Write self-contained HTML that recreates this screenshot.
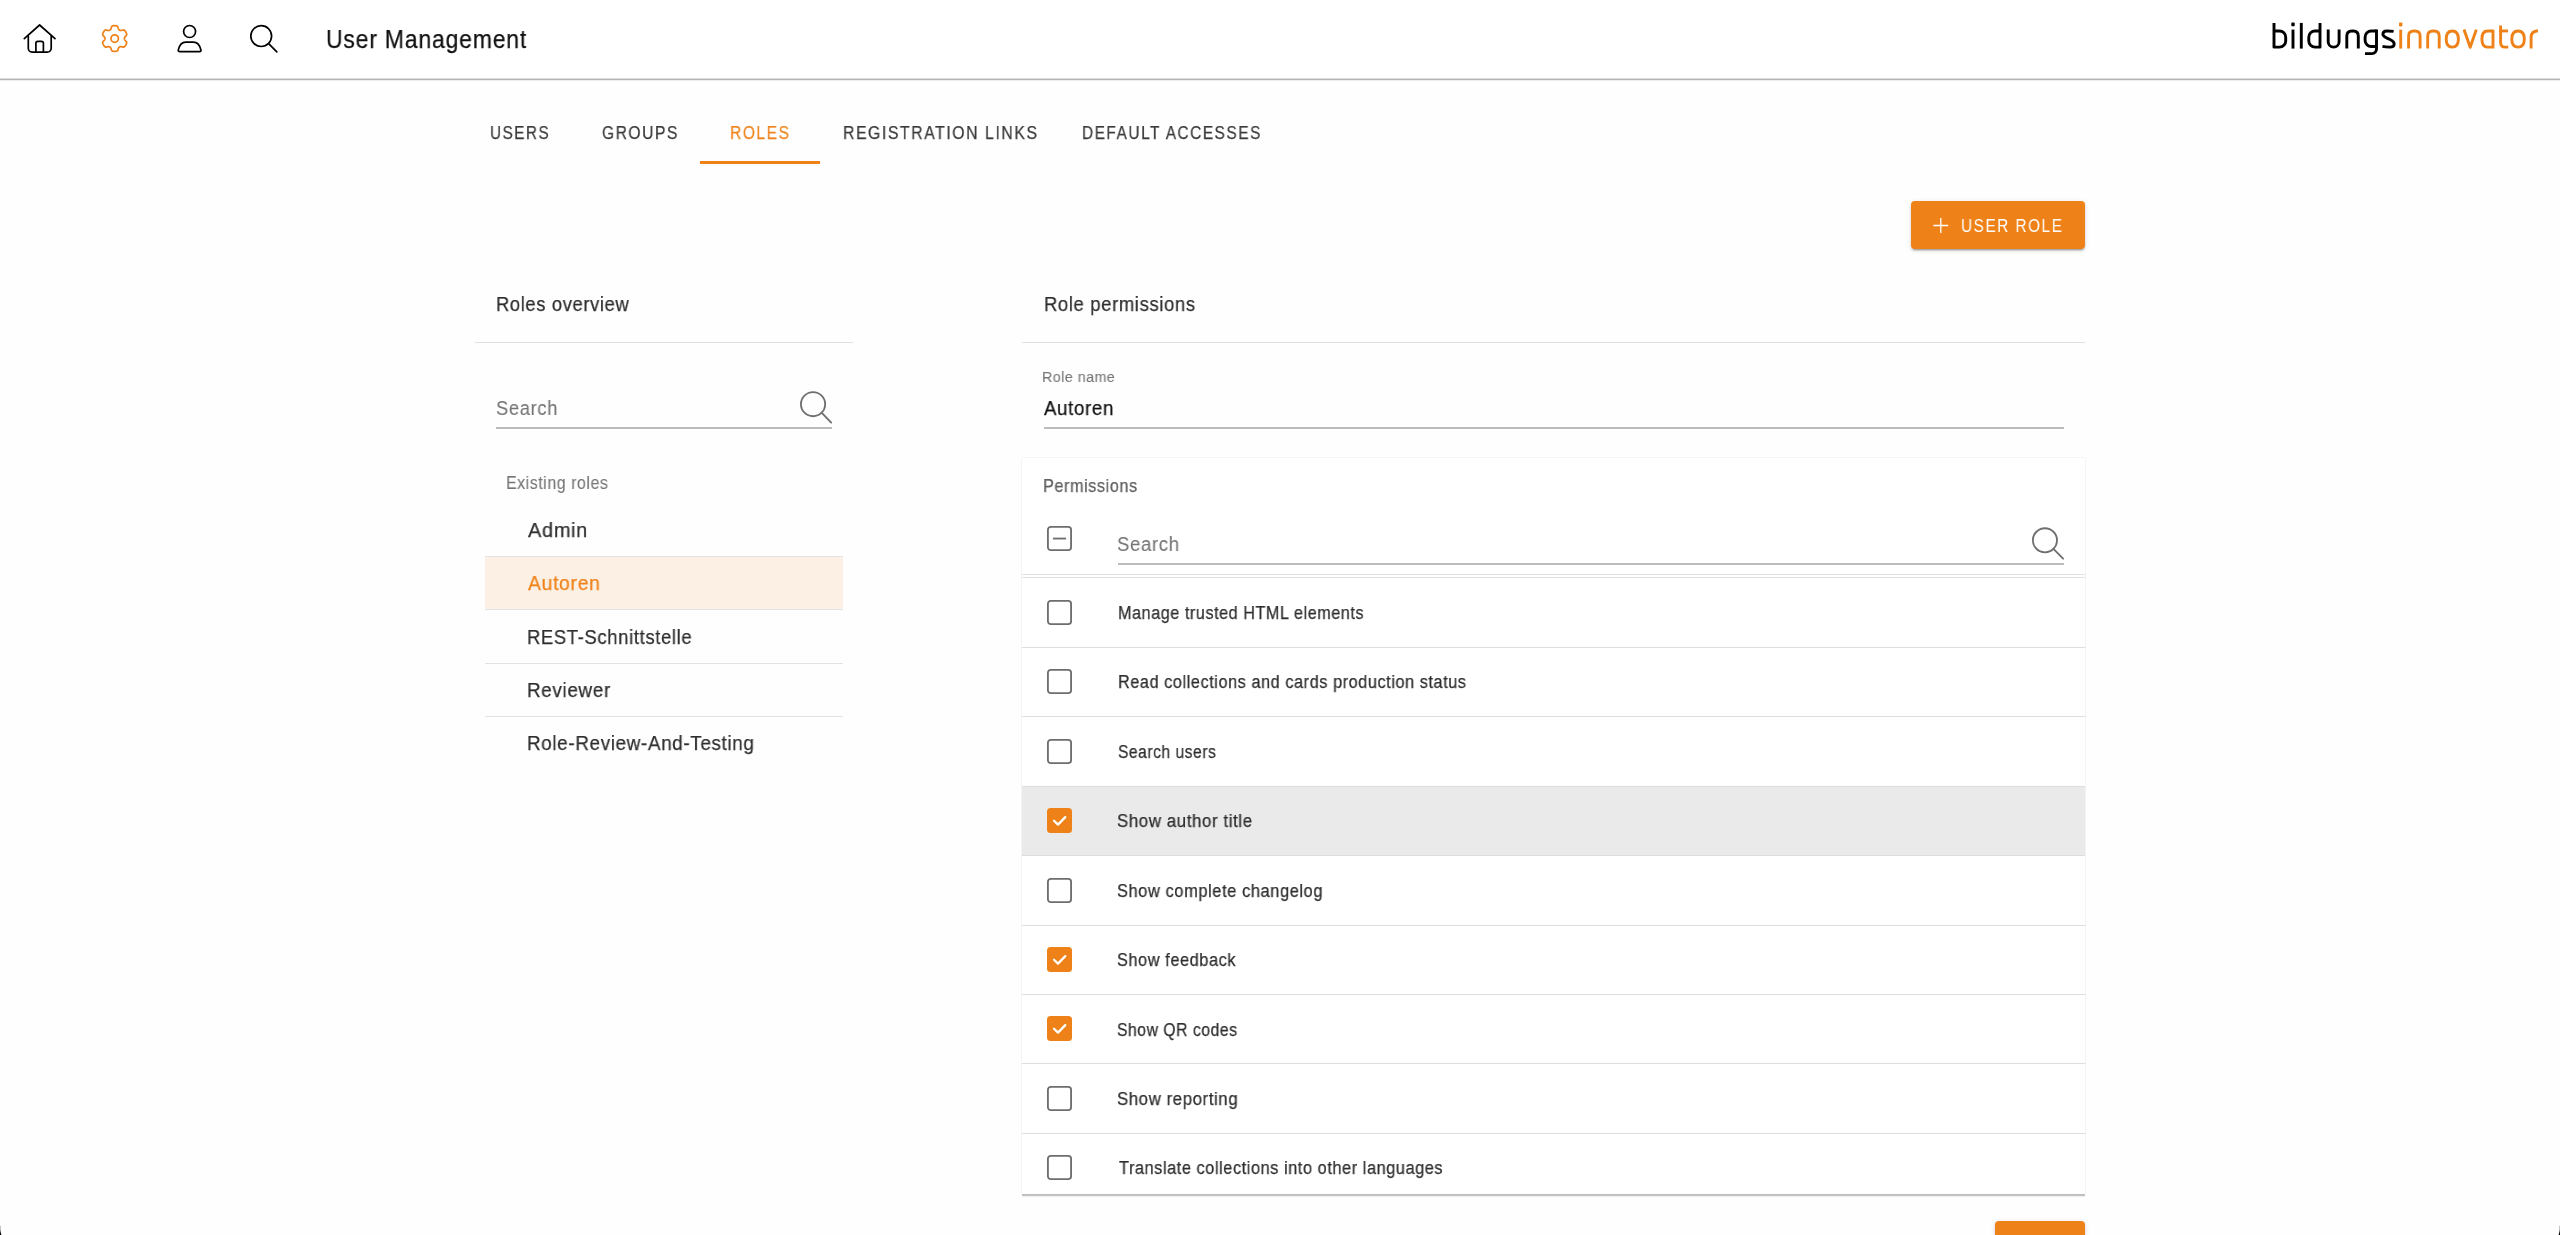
<!DOCTYPE html>
<html><head><meta charset="utf-8"><title>User Management</title>
<style>
html,body{margin:0;padding:0;}
body{width:2560px;height:1235px;overflow:hidden;position:relative;background:#fefefe;font-family:"Liberation Sans",sans-serif;}
.t{position:absolute;white-space:nowrap;transform-origin:0 0;will-change:transform;-webkit-text-stroke:0.25px currentColor;}
</style></head><body>
<div style="position:absolute;left:0px;top:0px;width:2560px;height:79px;background:#fff"></div>
<div style="position:absolute;left:0px;top:78px;width:2560px;height:1px;background:#dcdcdc"></div>
<div style="position:absolute;left:0px;top:79px;width:2560px;height:1px;background:#b4b4b4"></div>
<div style="position:absolute;left:0px;top:80px;width:2560px;height:1px;background:#ededed"></div>
<svg style="position:absolute;left:0;top:0" width="300" height="79" viewBox="0 0 300 79" fill="none" stroke-linecap="round" stroke-linejoin="round">
<g stroke="#000" stroke-width="1.7">
<path d="M24.3 38.7 L39.6 25 L55 38.7"/>
<path d="M28.3 36 V48.3 a3.8 3.8 0 0 0 3.8 3.8 H47.4 a3.8 3.8 0 0 0 3.8 -3.8 V36"/>
<path d="M35.9 52 V43.3 a2 2 0 0 1 2 -2 H41.4 a2 2 0 0 1 2 2 V52"/>
<circle cx="189.6" cy="31.5" r="6"/>
<path d="M180 51.6 H199.4 Q201.3 51.6 200.9 49.9 C199.8 45.5 197 42.2 193.5 42.2 H185.7 C182.2 42.2 179.4 45.5 178.3 49.9 Q177.9 51.6 180 51.6 Z"/>
<circle cx="261.2" cy="36.1" r="10.4"/>
<path d="M268.9 43.8 L276.8 51.8"/>
</g>
<path d="M110.30 29.78 L110.59 29.48 L110.84 29.04 L111.07 28.47 L111.27 27.76 L111.44 26.91 L111.94 26.27 L112.76 25.85 L113.92 25.64 L115.42 25.64 L116.58 25.85 L117.40 26.27 L117.90 26.91 L118.07 27.76 L118.27 28.47 L118.50 29.04 L118.75 29.48 L119.04 29.78 L119.36 30.03 L119.70 30.23 L120.08 30.38 L120.48 30.48 L120.99 30.48 L121.60 30.39 L122.32 30.21 L123.13 29.93 L123.93 30.04 L124.71 30.55 L125.48 31.45 L126.22 32.74 L126.62 33.85 L126.67 34.78 L126.37 35.53 L125.72 36.10 L125.20 36.63 L124.82 37.11 L124.57 37.55 L124.45 37.95 L124.39 38.35 L124.39 38.75 L124.45 39.15 L124.57 39.55 L124.82 39.99 L125.20 40.47 L125.72 41.00 L126.37 41.57 L126.67 42.32 L126.62 43.25 L126.22 44.36 L125.48 45.65 L124.71 46.55 L123.93 47.06 L123.13 47.17 L122.32 46.89 L121.60 46.71 L120.99 46.62 L120.48 46.62 L120.08 46.72 L119.70 46.87 L119.36 47.07 L119.04 47.32 L118.75 47.62 L118.50 48.06 L118.27 48.63 L118.07 49.34 L117.90 50.19 L117.40 50.83 L116.58 51.25 L115.42 51.46 L113.92 51.46 L112.76 51.25 L111.94 50.83 L111.44 50.19 L111.27 49.34 L111.07 48.63 L110.84 48.06 L110.59 47.62 L110.30 47.32 L109.98 47.07 L109.64 46.87 L109.26 46.72 L108.86 46.62 L108.35 46.62 L107.74 46.71 L107.02 46.89 L106.21 47.17 L105.41 47.06 L104.63 46.55 L103.86 45.65 L103.12 44.36 L102.72 43.25 L102.67 42.32 L102.97 41.57 L103.62 41.00 L104.14 40.47 L104.52 39.99 L104.77 39.55 L104.89 39.15 L104.95 38.75 L104.95 38.35 L104.89 37.95 L104.77 37.55 L104.52 37.11 L104.14 36.63 L103.62 36.10 L102.97 35.53 L102.67 34.78 L102.72 33.85 L103.12 32.74 L103.86 31.45 L104.63 30.55 L105.41 30.04 L106.21 29.93 L107.02 30.21 L107.74 30.39 L108.35 30.48 L108.86 30.48 L109.26 30.38 L109.64 30.23 L109.98 30.03Z" stroke="#ee8218" stroke-width="1.7"/><circle cx="114.67" cy="38.55" r="3.75" stroke="#ee8218" stroke-width="1.7"/>
</svg>
<div class="t" id="t0" style="left:326.42px;top:27.25px;font-size:25.58px;line-height:25.58px;color:#111;letter-spacing:0.90px;transform:scaleX(0.8978);">User Management</div>
<svg style="position:absolute;left:2260px;top:15px" width="290" height="45" viewBox="2260 15 290 45" fill="none" stroke-width="2.9" stroke-linecap="butt" stroke-linejoin="round">
<g stroke="#000">
<path d="M2274 22.9 V47.15 H2279.5 A6.2 6.2 0 0 0 2285.7 40.95 V37.15 A6.2 6.2 0 0 0 2279.5 30.95 H2274"/>
<path d="M2293 29.6 V48.6"/>
<path d="M2301.3 22.9 V48.6"/>
<path d="M2320 22.9 V47.15 H2315 A6.2 6.2 0 0 1 2308.8 40.95 V37.15 A6.2 6.2 0 0 1 2315 30.95 H2320"/>
<path d="M2328.2 29.6 V41.7 A5.45 5.45 0 0 0 2339.1 41.7 V29.6"/>
<path d="M2346.8 48.6 V36 Q2346.8 30.95 2351.8 30.95 H2353.3 Q2358.3 30.95 2358.3 36 V48.6"/>
<path d="M2376.5 30.95 H2371.3 A6.2 6.2 0 0 0 2365.1 37.15 V40.3 A6.2 6.2 0 0 0 2371.3 46.5 H2376.5"/>
<path d="M2376.5 29.6 V49.1 A4.5 4.5 0 0 1 2372 53.6 H2365"/>
<path d="M2393.6 31.4 C2391 30.9 2388.5 30.95 2386.8 30.95 C2384 30.95 2382.9 32.6 2382.9 34.2 C2382.9 36.3 2384.8 37 2387 38.1 L2390.5 39.8 C2392.7 40.9 2394.2 42 2394.2 44.1 C2394.2 46.1 2392.5 47.15 2389.8 47.15 C2387.5 47.15 2384.5 46.9 2382.5 46.4"/>
</g>
<rect x="2291.3" y="22.6" width="3.4" height="3.6" rx="0.8" fill="#000"/>
<g stroke="#ee8218">
<path d="M2400.7 29.6 V48.6"/>
<path d="M2408.6 48.6 V36 Q2408.6 30.95 2413.6 30.95 H2415.1 Q2420.1 30.95 2420.1 36 V48.6"/>
<path d="M2427.7 48.6 V36 Q2427.7 30.95 2432.7 30.95 H2434.2 Q2439.2 30.95 2439.2 36 V48.6"/>
<path d="M2452.3 30.95 C2456.5 30.95 2458.4 33.5 2458.4 39.05 C2458.4 44.6 2456.5 47.15 2452.3 47.15 C2448.1 47.15 2446.2 44.6 2446.2 39.05 C2446.2 33.5 2448.1 30.95 2452.3 30.95 Z"/>
<path d="M2464 29.6 L2470.2 47.3 L2476.3 29.6"/>
<path d="M2493 48.6 V30.95 H2487.5 C2483 30.95 2481.9 34 2481.9 39.05 C2481.9 44.1 2483 47.15 2487.5 47.15 H2493"/>
<path d="M2500.6 25.4 V42.5 C2500.6 46 2502 47.15 2505 47.15 H2508.2"/>
<path d="M2499.2 30.95 H2508"/>
<path d="M2518.05 30.95 C2522.3 30.95 2524.35 33.5 2524.35 39.05 C2524.35 44.6 2522.3 47.15 2518.05 47.15 C2513.8 47.15 2511.75 44.6 2511.75 39.05 C2511.75 33.5 2513.8 30.95 2518.05 30.95 Z"/>
<path d="M2531.1 48.6 V37 C2531.1 32.6 2533.8 31.2 2538 30.8"/>
</g>
<rect x="2399" y="22.4" width="3.4" height="4" rx="0.8" fill="#ee8218"/>
</svg>
<div class="t" id="t1" style="left:489.62px;top:123.52px;font-size:18.17px;line-height:18.17px;color:#3a3a3a;letter-spacing:1.82px;transform:scaleX(0.8405);">USERS</div>
<div class="t" id="t2" style="left:602.22px;top:123.52px;font-size:18.17px;line-height:18.17px;color:#3a3a3a;letter-spacing:1.82px;transform:scaleX(0.8577);">GROUPS</div>
<div class="t" id="t3" style="left:729.71px;top:123.52px;font-size:18.17px;line-height:18.17px;color:#ee8218;letter-spacing:1.82px;transform:scaleX(0.8574);">ROLES</div>
<div class="t" id="t4" style="left:843.30px;top:123.52px;font-size:18.17px;line-height:18.17px;color:#3a3a3a;letter-spacing:1.82px;transform:scaleX(0.8688);">REGISTRATION LINKS</div>
<div class="t" id="t5" style="left:1082.33px;top:123.52px;font-size:18.17px;line-height:18.17px;color:#3a3a3a;letter-spacing:1.82px;transform:scaleX(0.8482);">DEFAULT ACCESSES</div>
<div style="position:absolute;left:700px;top:161px;width:120px;height:3px;background:#ee8218"></div>
<div style="position:absolute;left:1911px;top:201px;width:174px;height:48px;background:#ee8218;border-radius:4px;box-shadow:0 3px 1px -2px rgba(0,0,0,.2),0 2px 2px 0 rgba(0,0,0,.14),0 1px 5px 0 rgba(0,0,0,.12)"></div>
<svg style="position:absolute;left:1930px;top:215px" width="22" height="22" viewBox="0 0 22 22"><path d="M3.4 10.5 H18.2 M10.8 3 V18" stroke="#fff" stroke-width="1.3" fill="none"/></svg>
<div class="t" id="t6" style="left:1961.01px;top:217.99px;font-size:17.73px;line-height:17.73px;color:#fff;letter-spacing:1.77px;transform:scaleX(0.8660);-webkit-text-stroke:0">USER ROLE</div>
<div class="t" id="t7" style="left:496.08px;top:294.43px;font-size:20.64px;line-height:20.64px;color:#2e2e2e;letter-spacing:0.72px;transform:scaleX(0.8898);">Roles overview</div>
<div style="position:absolute;left:475px;top:342px;width:378px;height:1px;background:#e0e0e0"></div>
<div class="t" id="t8" style="left:495.77px;top:398.84px;font-size:19.91px;line-height:19.91px;color:#757575;letter-spacing:0.70px;transform:scaleX(0.9230);-webkit-text-stroke:0.1px currentColor;">Search</div>
<div style="position:absolute;left:496px;top:427px;width:336px;height:2px;background:#bcbcbc"></div>
<svg style="position:absolute;left:790px;top:380px" width="50" height="50" viewBox="790 380 50 50" fill="none" stroke="#6f6f6f" stroke-width="1.85" stroke-linecap="round"><circle cx="813.05" cy="404.15" r="12.1"/><path d="M821.8 412.9 L831.2 422.6"/></svg>
<div class="t" id="t9" style="left:506.29px;top:474.57px;font-size:17.88px;line-height:17.88px;color:#757575;letter-spacing:0.63px;transform:scaleX(0.8901);-webkit-text-stroke:0.1px currentColor;">Existing roles</div>
<div style="position:absolute;left:485px;top:556px;width:358px;height:53px;background:#fcefe4"></div>
<div style="position:absolute;left:485px;top:556px;width:358px;height:1px;background:#e2e2e2"></div>
<div style="position:absolute;left:485px;top:609px;width:358px;height:1px;background:#e2e2e2"></div>
<div style="position:absolute;left:485px;top:663px;width:358px;height:1px;background:#e2e2e2"></div>
<div style="position:absolute;left:485px;top:716px;width:358px;height:1px;background:#e2e2e2"></div>
<div class="t" id="t10" style="left:527.75px;top:520.43px;font-size:20.64px;line-height:20.64px;color:#2e2e2e;letter-spacing:0.72px;transform:scaleX(0.9673);">Admin</div>
<div class="t" id="t11" style="left:527.75px;top:572.83px;font-size:20.64px;line-height:20.64px;color:#ee8218;letter-spacing:0.72px;transform:scaleX(0.9386);">Autoren</div>
<div class="t" id="t12" style="left:527.28px;top:627.23px;font-size:20.64px;line-height:20.64px;color:#2e2e2e;letter-spacing:0.72px;transform:scaleX(0.8937);">REST-Schnittstelle</div>
<div class="t" id="t13" style="left:527.24px;top:679.63px;font-size:20.64px;line-height:20.64px;color:#2e2e2e;letter-spacing:0.72px;transform:scaleX(0.9143);">Reviewer</div>
<div class="t" id="t14" style="left:527.25px;top:733.03px;font-size:20.64px;line-height:20.64px;color:#2e2e2e;letter-spacing:0.72px;transform:scaleX(0.9131);">Role-Review-And-Testing</div>
<div class="t" id="t15" style="left:1043.68px;top:294.43px;font-size:20.64px;line-height:20.64px;color:#2e2e2e;letter-spacing:0.72px;transform:scaleX(0.8938);">Role permissions</div>
<div style="position:absolute;left:1022px;top:342px;width:1063px;height:1px;background:#e0e0e0"></div>
<div class="t" id="t16" style="left:1042.43px;top:370.35px;font-size:14.83px;line-height:14.83px;color:#757575;letter-spacing:0.52px;transform:scaleX(0.9597);-webkit-text-stroke:0.1px currentColor;">Role name</div>
<div class="t" id="t17" style="left:1043.55px;top:398.97px;font-size:19.77px;line-height:19.77px;color:#111;letter-spacing:0.69px;transform:scaleX(0.9442);">Autoren</div>
<div style="position:absolute;left:1044px;top:427px;width:1020px;height:2px;background:#bcbcbc"></div>
<div style="position:absolute;left:1022px;top:458px;width:1063px;height:736px;background:#fff;box-shadow:0 1px 0 #bdbdbd,0 2px 0 #c4c4c4,0 3px 1px rgba(0,0,0,.06),0 0 1.5px rgba(0,0,0,.14)"></div>
<div class="t" id="t18" style="left:1042.66px;top:477.12px;font-size:18.17px;line-height:18.17px;color:#606060;letter-spacing:0.64px;transform:scaleX(0.8939);">Permissions</div>
<svg style="position:absolute;left:1047.4px;top:525.9px" width="25" height="25" viewBox="0 0 24.5 24.5"><rect x="0.9" y="0.9" width="22.7" height="22.7" rx="2.8" fill="none" stroke="#6e6e6e" stroke-width="1.8"/><path d="M5.8 12.3 H18.7" stroke="#6e6e6e" stroke-width="1.8"/></svg>
<div class="t" id="t19" style="left:1117.16px;top:534.84px;font-size:19.91px;line-height:19.91px;color:#757575;letter-spacing:0.70px;transform:scaleX(0.9323);-webkit-text-stroke:0.1px currentColor;">Search</div>
<div style="position:absolute;left:1118px;top:563px;width:946px;height:2px;background:#bcbcbc"></div>
<svg style="position:absolute;left:2020px;top:515px" width="50" height="50" viewBox="2020 515 50 50" fill="none" stroke="#6f6f6f" stroke-width="1.85" stroke-linecap="round"><circle cx="2044.95" cy="540.25" r="12.05"/><path d="M2053.7 549.1 L2063.1 558.7"/></svg>
<div style="position:absolute;left:1022px;top:574px;width:1063px;height:1px;background:#e2e2e2"></div>
<div style="position:absolute;left:1022px;top:577px;width:1063px;height:1px;background:#e2e2e2"></div>
<svg style="position:absolute;left:1047.4px;top:599.81px" width="25" height="25" viewBox="0 0 24.5 24.5"><rect x="0.9" y="0.9" width="22.7" height="22.7" rx="2.8" fill="none" stroke="#6e6e6e" stroke-width="1.8"/></svg>
<div class="t" id="t20" style="left:1117.87px;top:604.83px;font-size:17.88px;line-height:17.88px;color:#2e2e2e;letter-spacing:0.63px;transform:scaleX(0.9046);">Manage trusted HTML elements</div>
<div style="position:absolute;left:1022px;top:647px;width:1063px;height:1px;background:#dedede"></div>
<svg style="position:absolute;left:1047.4px;top:669.25px" width="25" height="25" viewBox="0 0 24.5 24.5"><rect x="0.9" y="0.9" width="22.7" height="22.7" rx="2.8" fill="none" stroke="#6e6e6e" stroke-width="1.8"/></svg>
<div class="t" id="t21" style="left:1117.86px;top:674.27px;font-size:17.88px;line-height:17.88px;color:#2e2e2e;letter-spacing:0.63px;transform:scaleX(0.9097);">Read collections and cards production status</div>
<div style="position:absolute;left:1022px;top:716px;width:1063px;height:1px;background:#dedede"></div>
<svg style="position:absolute;left:1047.4px;top:738.69px" width="25" height="25" viewBox="0 0 24.5 24.5"><rect x="0.9" y="0.9" width="22.7" height="22.7" rx="2.8" fill="none" stroke="#6e6e6e" stroke-width="1.8"/></svg>
<div class="t" id="t22" style="left:1117.50px;top:743.71px;font-size:17.88px;line-height:17.88px;color:#2e2e2e;letter-spacing:0.63px;transform:scaleX(0.8719);">Search users</div>
<div style="position:absolute;left:1022px;top:786px;width:1063px;height:69px;background:#eaeaea"></div>
<div style="position:absolute;left:1022px;top:786px;width:1063px;height:1px;background:#dedede"></div>
<div style="position:absolute;left:1047.3px;top:808.13px;width:24.5px;height:24.5px;background:#ee8218;border-radius:3.5px"></div>
<svg style="position:absolute;left:1047.3px;top:808.13px" width="25" height="25" viewBox="0 0 25 25"><path d="M7.0 12.7 L11.0 16.6 L18.3 9.1" stroke="#fff" stroke-width="2.3" fill="none" stroke-linecap="round" stroke-linejoin="round"/></svg>
<div class="t" id="t23" style="left:1117.44px;top:813.15px;font-size:17.88px;line-height:17.88px;color:#2e2e2e;letter-spacing:0.63px;transform:scaleX(0.9436);">Show author title</div>
<div style="position:absolute;left:1022px;top:855px;width:1063px;height:1px;background:#dedede"></div>
<svg style="position:absolute;left:1047.4px;top:877.57px" width="25" height="25" viewBox="0 0 24.5 24.5"><rect x="0.9" y="0.9" width="22.7" height="22.7" rx="2.8" fill="none" stroke="#6e6e6e" stroke-width="1.8"/></svg>
<div class="t" id="t24" style="left:1117.46px;top:882.59px;font-size:17.88px;line-height:17.88px;color:#2e2e2e;letter-spacing:0.63px;transform:scaleX(0.9199);">Show complete changelog</div>
<div style="position:absolute;left:1022px;top:925px;width:1063px;height:1px;background:#dedede"></div>
<div style="position:absolute;left:1047.3px;top:947.0099999999999px;width:24.5px;height:24.5px;background:#ee8218;border-radius:3.5px"></div>
<svg style="position:absolute;left:1047.3px;top:947.01px" width="25" height="25" viewBox="0 0 25 25"><path d="M7.0 12.7 L11.0 16.6 L18.3 9.1" stroke="#fff" stroke-width="2.3" fill="none" stroke-linecap="round" stroke-linejoin="round"/></svg>
<div class="t" id="t25" style="left:1117.47px;top:952.03px;font-size:17.88px;line-height:17.88px;color:#2e2e2e;letter-spacing:0.63px;transform:scaleX(0.9136);">Show feedback</div>
<div style="position:absolute;left:1022px;top:994px;width:1063px;height:1px;background:#dedede"></div>
<div style="position:absolute;left:1047.3px;top:1016.45px;width:24.5px;height:24.5px;background:#ee8218;border-radius:3.5px"></div>
<svg style="position:absolute;left:1047.3px;top:1016.45px" width="25" height="25" viewBox="0 0 25 25"><path d="M7.0 12.7 L11.0 16.6 L18.3 9.1" stroke="#fff" stroke-width="2.3" fill="none" stroke-linecap="round" stroke-linejoin="round"/></svg>
<div class="t" id="t26" style="left:1117.49px;top:1022.47px;font-size:17.88px;line-height:17.88px;color:#2e2e2e;letter-spacing:0.63px;transform:scaleX(0.8784);">Show QR codes</div>
<div style="position:absolute;left:1022px;top:1063px;width:1063px;height:1px;background:#dedede"></div>
<svg style="position:absolute;left:1047.4px;top:1085.89px" width="25" height="25" viewBox="0 0 24.5 24.5"><rect x="0.9" y="0.9" width="22.7" height="22.7" rx="2.8" fill="none" stroke="#6e6e6e" stroke-width="1.8"/></svg>
<div class="t" id="t27" style="left:1117.44px;top:1090.91px;font-size:17.88px;line-height:17.88px;color:#2e2e2e;letter-spacing:0.63px;transform:scaleX(0.9396);">Show reporting</div>
<div style="position:absolute;left:1022px;top:1133px;width:1063px;height:1px;background:#dedede"></div>
<svg style="position:absolute;left:1047.4px;top:1155.33px" width="25" height="25" viewBox="0 0 24.5 24.5"><rect x="0.9" y="0.9" width="22.7" height="22.7" rx="2.8" fill="none" stroke="#6e6e6e" stroke-width="1.8"/></svg>
<div class="t" id="t28" style="left:1118.83px;top:1160.35px;font-size:17.88px;line-height:17.88px;color:#2e2e2e;letter-spacing:0.63px;transform:scaleX(0.9120);">Translate collections into other languages</div>
<div style="position:absolute;left:0;top:1226px;width:4px;height:9px;background:radial-gradient(circle 20px at 20px 2px,rgba(0,0,0,0) 19.3px,#000 20.3px)"></div>
<div style="position:absolute;left:2556px;top:1226px;width:4px;height:9px;background:radial-gradient(circle 20px at -16px 2px,rgba(0,0,0,0) 19.3px,#000 20.3px)"></div>
<div style="position:absolute;left:1995px;top:1221px;width:90px;height:40px;background:#ee8218;border-radius:4px;box-shadow:0 3px 1px -2px rgba(0,0,0,.2),0 2px 2px 0 rgba(0,0,0,.14),0 1px 5px 0 rgba(0,0,0,.12)"></div>
</body></html>
